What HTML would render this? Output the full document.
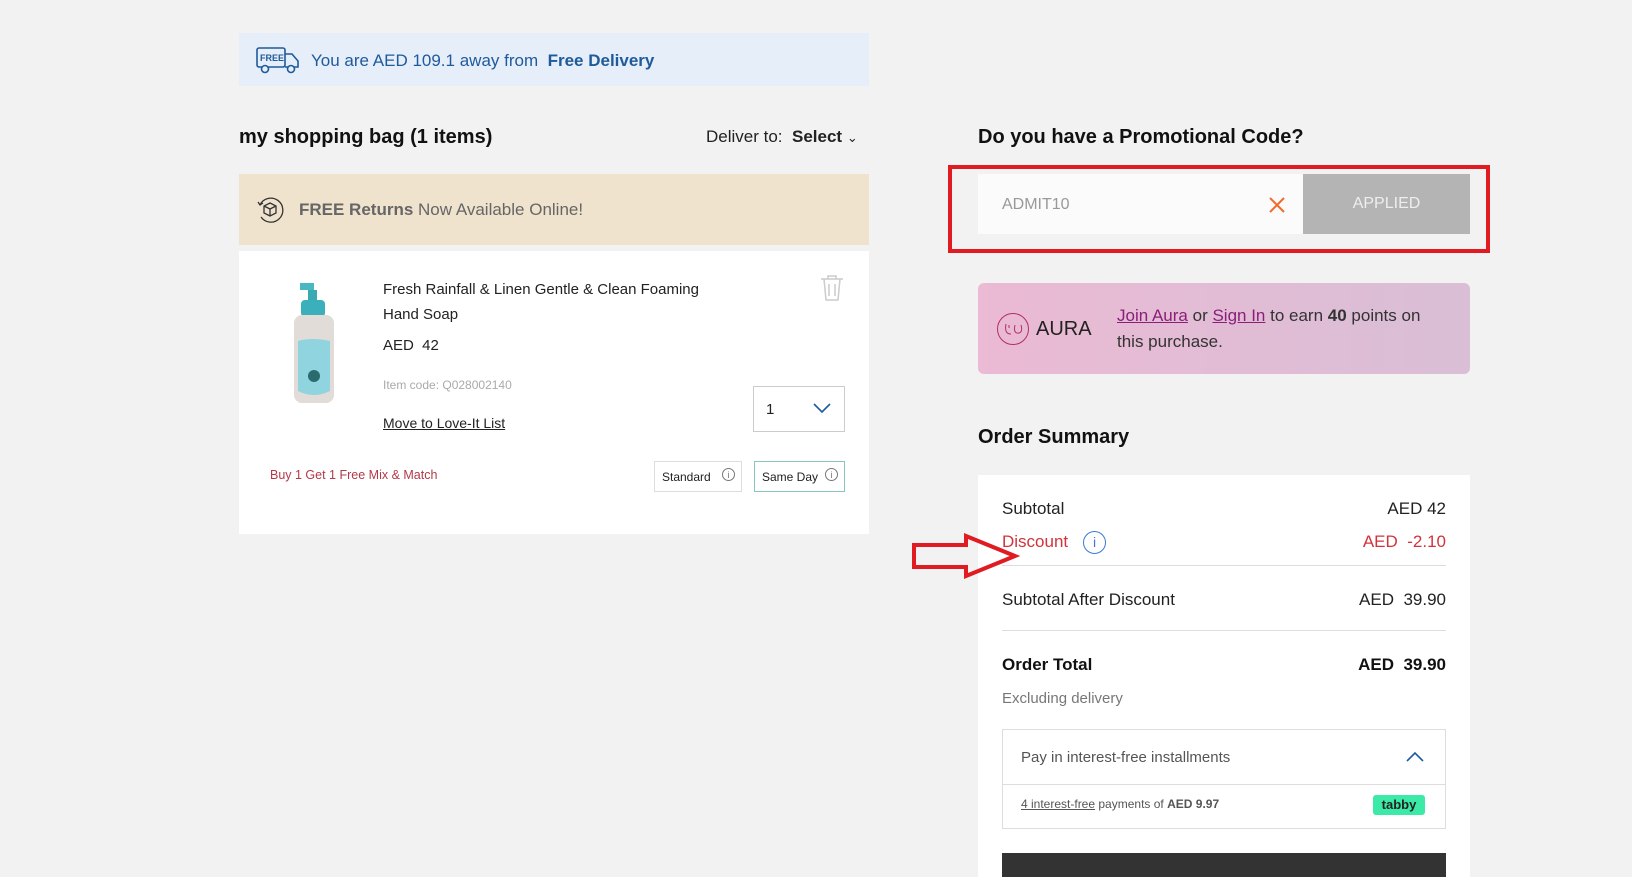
<!DOCTYPE html>
<html><head><meta charset="utf-8">
<style>
*{box-sizing:border-box;margin:0;padding:0}
body{width:1632px;height:877px;background:#f2f2f2;font-family:"Liberation Sans",sans-serif;color:#222;position:relative;overflow:hidden}
.a{position:absolute}
</style></head><body>

<div class="a" style="left:239px;top:33px;width:630px;height:53px;background:#e6eefa"></div>
<svg class="a" style="left:255px;top:45px" width="46" height="30" viewBox="0 0 46 30" fill="none" stroke="#1f5a9a" stroke-width="1.6">
<rect x="2" y="3" width="28" height="19" rx="2"/><path d="M30 9h7l6 7v6h-13"/><circle cx="10" cy="24" r="3.5" fill="#e6eefa"/><circle cx="36" cy="24" r="3.5" fill="#e6eefa"/>
<text x="5" y="16" font-size="9" font-weight="bold" fill="#1f5a9a" stroke="none" font-family="Liberation Sans">FREE</text></svg>
<div class="a" style="left:311px;top:51px;font-size:17px;color:#1f5a9a">You are AED 109.1 away from&nbsp; <b>Free Delivery</b></div>

<div class="a" style="left:239px;top:126px;font-size:20px;font-weight:bold;color:#111">my shopping bag (1 items)</div>
<div class="a" style="left:706px;top:127px;font-size:17px;color:#222">Deliver to:&nbsp; <b>Select</b> <span style="font-size:13px">&#8964;</span></div>

<div class="a" style="left:239px;top:174px;width:630px;height:71px;background:#efe3cd"></div>
<svg class="a" style="left:255px;top:195px" width="30" height="30" viewBox="0 0 30 30" fill="none" stroke="#333" stroke-width="1.3">
<path d="M5 10A12 12 0 1 1 6 22"/><path d="M3 7l2 3 3-2"/><path d="M15 8l6 3v7l-6 3-6-3v-7z M9 11l6 3 6-3 M15 14v7"/></svg>
<div class="a" style="left:299px;top:200px;font-size:17px;color:#666"><b>FREE Returns</b> Now Available Online!</div>

<div class="a" style="left:239px;top:251px;width:630px;height:283px;background:#fff"></div>
<svg class="a" style="left:286px;top:281px" width="58" height="130" viewBox="0 0 58 130">
<rect x="14" y="2" width="14" height="7" fill="#4ab8c0"/><rect x="22" y="9" width="9" height="12" fill="#3aa9b3"/>
<rect x="15" y="19" width="24" height="17" rx="4" fill="#3bb0ba"/>
<rect x="8" y="34" width="40" height="88" rx="8" fill="#e2dcd8"/>
<path d="M12 60q14-4 32 0v50q-16 8-32 0z" fill="#8fd4df"/><circle cx="28" cy="95" r="6" fill="#2a6b6e"/></svg>
<div class="a" style="left:383px;top:277px;font-size:15px;line-height:25px;color:#222;width:330px">Fresh Rainfall &amp; Linen Gentle &amp; Clean Foaming Hand Soap</div>
<div class="a" style="left:383px;top:337px;font-size:15px;color:#222">AED&nbsp; 42</div>
<div class="a" style="left:383px;top:378px;font-size:12px;color:#aaa">Item code: Q028002140</div>
<div class="a" style="left:383px;top:415px;font-size:14px;color:#222;text-decoration:underline">Move to Love-It List</div>
<svg class="a" style="left:819px;top:274px" width="26" height="28" viewBox="0 0 26 28" fill="none" stroke="#ccc" stroke-width="1.5">
<path d="M2 5h22M9 5V2h8v3M5 5l2 21h12l2-21M10 10v12M16 10v12"/></svg>
<div class="a" style="left:753px;top:386px;width:92px;height:46px;border:1px solid #ccc"></div>
<div class="a" style="left:766px;top:401px;font-size:15px;color:#222">1</div>
<svg class="a" style="left:812px;top:402px" width="20" height="12" viewBox="0 0 20 12" fill="none" stroke="#1f5a9a" stroke-width="1.6"><path d="M2 2l8 8 8-8"/></svg>
<div class="a" style="left:270px;top:468px;font-size:12.5px;color:#b23a48">Buy 1 Get 1 Free Mix &amp; Match</div>
<div class="a" style="left:654px;top:461px;width:88px;height:31px;border:1px solid #ddd;font-size:12px;padding:8px 7px;color:#222">Standard <span style="position:absolute;right:6px;top:6px;width:13px;height:13px;border:1px solid #777;border-radius:50%;font-size:9px;text-align:center;line-height:12px;color:#777">i</span></div>
<div class="a" style="left:754px;top:461px;width:91px;height:31px;border:1px solid #8ac6c0;font-size:12px;padding:8px 7px;color:#222">Same Day <span style="position:absolute;right:6px;top:6px;width:13px;height:13px;border:1px solid #777;border-radius:50%;font-size:9px;text-align:center;line-height:12px;color:#777">i</span></div>

<div class="a" style="left:978px;top:126px;font-size:20px;font-weight:bold;color:#111">Do you have a Promotional Code?</div>
<div class="a" style="left:948px;top:165px;width:542px;height:88px;border:4px solid #e11b22"></div>
<div class="a" style="left:978px;top:174px;width:325px;height:60px;background:#fbfbfb"></div>
<div class="a" style="left:1002px;top:196px;font-size:16px;color:#999">ADMIT10</div>
<svg class="a" style="left:1268px;top:196px" width="18" height="18" viewBox="0 0 18 18" stroke="#f26b2a" stroke-width="2"><path d="M2 2l14 14M16 2L2 16"/></svg>
<div class="a" style="left:1303px;top:174px;width:167px;height:60px;background:#b4b4b4;color:#eee;font-size:16px;text-align:center;line-height:60px">APPLIED</div>

<div class="a" style="left:978px;top:283px;width:492px;height:91px;border-radius:6px;background:linear-gradient(90deg,#ebbad4,#d9bed6)"></div>
<svg class="a" style="left:996px;top:312px" width="34" height="34" viewBox="0 0 34 34" fill="none" stroke="#b0305e" stroke-width="1"><circle cx="17" cy="17" r="15.5"/><path d="M10 12q-2 10 5 10M19 13q-2 9 4 8q4-1 2-8M13 13v3"/></svg>
<div class="a" style="left:1036px;top:318px;font-size:20px;color:#222">AURA</div>
<div class="a" style="left:1117px;top:303px;font-size:17px;line-height:26px;color:#333;width:318px"><u style="color:#8a1f7a">Join Aura</u> or <u style="color:#8a1f7a">Sign In</u> to earn <b>40</b> points on this purchase.</div>

<div class="a" style="left:978px;top:426px;font-size:20px;font-weight:bold;color:#111">Order Summary</div>
<div class="a" style="left:978px;top:475px;width:492px;height:402px;background:#fff"></div>
<div class="a" style="left:1002px;top:499px;font-size:17px;color:#222">Subtotal</div>
<div class="a" style="right:186px;top:499px;font-size:17px;color:#222">AED 42</div>
<div class="a" style="left:1002px;top:532px;font-size:17px;color:#d0343c">Discount</div>
<div class="a" style="left:1083px;top:531px;width:23px;height:23px;border:1.5px solid #3a7ad6;border-radius:50%;color:#3a7ad6;font-size:14px;text-align:center;line-height:21px">i</div>
<div class="a" style="right:186px;top:532px;font-size:17px;color:#d0343c">AED&nbsp; -2.10</div>
<div class="a" style="left:1002px;top:565px;width:444px;height:1px;background:#ddd"></div>
<div class="a" style="left:1002px;top:590px;font-size:17px;color:#222">Subtotal After Discount</div>
<div class="a" style="right:186px;top:590px;font-size:17px;color:#222">AED&nbsp; 39.90</div>
<div class="a" style="left:1002px;top:630px;width:444px;height:1px;background:#ddd"></div>
<div class="a" style="left:1002px;top:655px;font-size:17px;font-weight:bold;color:#111">Order Total</div>
<div class="a" style="right:186px;top:655px;font-size:17px;font-weight:bold;color:#111">AED&nbsp; 39.90</div>
<div class="a" style="left:1002px;top:690px;font-size:15px;color:#777">Excluding delivery</div>
<div class="a" style="left:1002px;top:729px;width:444px;height:100px;border:1px solid #ddd"></div>
<div class="a" style="left:1002px;top:784px;width:444px;height:1px;background:#ddd"></div>
<div class="a" style="left:1021px;top:749px;font-size:15px;color:#555">Pay in interest-free installments</div>
<svg class="a" style="left:1405px;top:751px" width="20" height="12" viewBox="0 0 20 12" fill="none" stroke="#1f5a9a" stroke-width="1.6"><path d="M2 10l8-8 8 8"/></svg>
<div class="a" style="left:1021px;top:797px;font-size:12px;color:#555"><u>4 interest-free</u> payments of <b>AED 9.97</b></div>
<div class="a" style="left:1373px;top:795px;width:52px;height:20px;background:#3beaa6;border-radius:3px;font-size:13px;font-weight:bold;text-align:center;line-height:20px;color:#222">tabby</div>
<div class="a" style="left:1002px;top:853px;width:444px;height:24px;background:#333"></div>

<svg class="a" style="left:910px;top:532px" width="112" height="50" viewBox="0 0 112 50" fill="none" stroke="#e11b22" stroke-width="4">
<path d="M4 13h52V4l49 20-49 20v-9H4z"/></svg>
</body></html>
